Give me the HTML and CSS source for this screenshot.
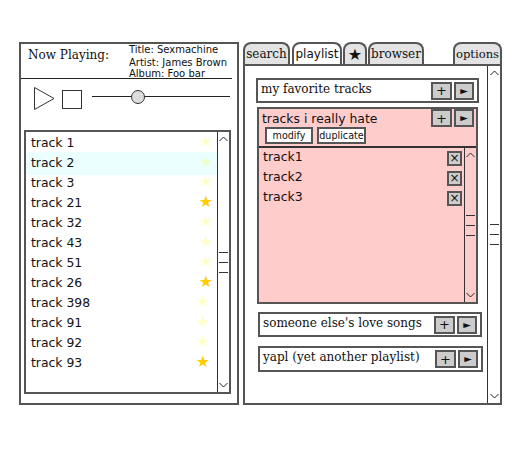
FILE: index.html
```html
<!DOCTYPE html>
<html>
<head>
<meta charset="utf-8">
<link rel="stylesheet" href="styles.css">
</head>
<body>
<div class="app">
  <section class="player">
    <header class="np">
      <div class="np-label">Now Playing:</div>
      <div class="np-info">
        <div class="np-title">Title: Sexmachine</div>
        <div class="np-artist">Artist: James Brown</div>
        <div class="np-album">Album: Foo bar</div>
      </div>
    </header>
    <div class="controls">
      <svg class="play" width="21" height="23" viewBox="0 0 21 23"><polygon points="0.5,0.5 20,11.5 0.5,22.5" fill="#fff" stroke="#333" stroke-width="1"/></svg>
      <div class="stop"></div>
      <div class="slider"><div class="knob"></div></div>
    </div>
    <div class="tracklist">
      <ul class="tracks">
        <li class="track">track 1<span class="star">★</span></li>
        <li class="track track--hl">track 2<span class="star">★</span></li>
        <li class="track">track 3<span class="star">★</span></li>
        <li class="track">track 21<span class="star star--on">★</span></li>
        <li class="track">track 32<span class="star">★</span></li>
        <li class="track">track 43<span class="star">★</span></li>
        <li class="track">track 51<span class="star">★</span></li>
        <li class="track">track 26<span class="star star--on">★</span></li>
        <li class="track track--in">track 398<span class="star">★</span></li>
        <li class="track track--in">track 91<span class="star">★</span></li>
        <li class="track track--in">track 92<span class="star">★</span></li>
        <li class="track track--in">track 93<span class="star star--on">★</span></li>
      </ul>
      <div class="scroll">
        <svg class="chev" width="9" height="6" viewBox="0 0 9 6"><polyline points="0.5,5 4.5,1 8.5,5" fill="none" stroke="#222" stroke-width="1"/></svg>
        <svg class="grip" width="9" height="21" viewBox="0 0 9 21"><path d="M0 0.5H9M0 10.5H9M0 20.5H9" stroke="#333" stroke-width="1"/></svg>
        <svg class="chev" width="9" height="6" viewBox="0 0 9 6"><polyline points="0.5,1 4.5,5 8.5,1" fill="none" stroke="#222" stroke-width="1"/></svg>
      </div>
    </div>
  </section>

  <section class="lists">
    <nav class="tabs">
      <div class="tab tab--search">search</div>
      <div class="tab tab--playlist">playlist</div>
      <div class="tab tab--fav">★</div>
      <div class="tab tab--browser">browser</div>
      <div class="tab tab--options">options</div>
    </nav>
    <div class="tabpanel">
      <div class="playlists">
        <div class="pl pl--a">
          <span class="pl-name">my favorite tracks</span>
          <span class="btn">+</span><span class="btn btn--play">►</span>
        </div>
        <div class="pl pl--open">
          <div class="pl-head">
            <span class="pl-name pl-name--sans">tracks i really hate</span>
            <span class="btn">+</span><span class="btn btn--play">►</span>
          </div>
          <div class="pl-actions">
            <span class="small-btn small-btn--modify">modify</span>
            <span class="small-btn small-btn--dup">duplicate</span>
          </div>
          <div class="pl-body">
            <ul class="sub-tracks">
              <li class="sub-track"><span class="sub-name">track1</span><span class="x-btn">×</span></li>
              <li class="sub-track"><span class="sub-name">track2</span><span class="x-btn">×</span></li>
              <li class="sub-track"><span class="sub-name">track3</span><span class="x-btn">×</span></li>
            </ul>
            <div class="scroll">
              <svg class="chev" width="9" height="6" viewBox="0 0 9 6"><polyline points="0.5,5 4.5,1 8.5,5" fill="none" stroke="#222" stroke-width="1"/></svg>
              <svg class="grip" width="9" height="21" viewBox="0 0 9 21"><path d="M0 0.5H9M0 10.5H9M0 20.5H9" stroke="#333" stroke-width="1"/></svg>
              <svg class="chev" width="9" height="6" viewBox="0 0 9 6"><polyline points="0.5,1 4.5,5 8.5,1" fill="none" stroke="#222" stroke-width="1"/></svg>
            </div>
          </div>
        </div>
        <div class="pl pl--b">
          <span class="pl-name">someone else's love songs</span>
          <span class="btn">+</span><span class="btn btn--play">►</span>
        </div>
        <div class="pl pl--c">
          <span class="pl-name">yapl (yet another playlist)</span>
          <span class="btn">+</span><span class="btn btn--play">►</span>
        </div>
      </div>
      <div class="scroll scroll--panel">
        <svg class="chev" width="9" height="6" viewBox="0 0 9 6"><polyline points="0.5,5 4.5,1 8.5,5" fill="none" stroke="#222" stroke-width="1"/></svg>
        <svg class="grip" width="9" height="21" viewBox="0 0 9 21"><path d="M0 0.5H9M0 10.5H9M0 20.5H9" stroke="#333" stroke-width="1"/></svg>
        <svg class="chev" width="9" height="6" viewBox="0 0 9 6"><polyline points="0.5,1 4.5,5 8.5,1" fill="none" stroke="#222" stroke-width="1"/></svg>
      </div>
    </div>
  </section>
</div>
</body>
</html>
```

FILE: styles.css
```css
* { box-sizing: border-box; }

body {
  margin: 0;
  background: #fff;
  color: #111;
  font-family: "DejaVu Sans", sans-serif;
}

.app {
  display: flex;
  gap: 4px;
  padding: 42px 0 0 19px;
}

/* ---------- left: player ---------- */
.player {
  width: 220px;
  height: 363px;
  border: 2px solid #555;
  display: flex;
  flex-direction: column;
}

.np {
  height: 35px;
  margin-right: 5px;
  border-bottom: 1px solid #222;
  display: flex;
}

.np-label {
  width: 108px;
  padding: 4px 0 0 7px;
  font-family: "DejaVu Serif", serif;
  font-size: 12px;
  line-height: 14px;
}

.np-info { font-size: 10px; }
.np-title { line-height: 12px; }
.np-artist { line-height: 13px; }
.np-album { line-height: 9px; }

.controls {
  height: 51px;
  display: flex;
  align-items: flex-start;
  padding: 8px 0 0 13px;
}

.play { display: block; }

.stop {
  width: 20px;
  height: 19px;
  border: 1px solid #333;
  margin: 3px 0 0 7px;
}

.slider {
  position: relative;
  width: 138px;
  height: 14px;
  margin: 3px 0 0 10px;
}

.slider::before {
  content: "";
  position: absolute;
  left: 0;
  right: 0;
  top: 6px;
  height: 1px;
  background: #222;
}

.knob {
  position: absolute;
  left: 39px;
  top: 0;
  width: 14px;
  height: 14px;
  border: 1px solid #333;
  border-radius: 50%;
  background: #ddd;
}

.tracklist {
  height: 264px;
  margin: 0 6px 0 3px;
  border: 2px solid #555;
  display: flex;
}

.tracks {
  flex: 1;
  list-style: none;
  margin: 0;
  padding: 0;
}

.track {
  height: 20px;
  display: flex;
  align-items: center;
  justify-content: space-between;
  padding: 0 4px 0 5px;
  font-size: 12.4px;
}

.track--hl {
  background: #ecffff;
  box-shadow: 0 3px 0 #ecffff;
}

.track--in { padding-right: 7px; }

.star {
  font-size: 16px;
  line-height: 20px;
  color: rgba(255, 255, 0, 0.22);
}

.star--on { color: #ffcc00; }

.scroll {
  width: 12px;
  border-left: 1px solid #333;
  display: flex;
  flex-direction: column;
  align-items: center;
  justify-content: space-between;
  padding: 4px 0;
}

.scroll--panel { width: 13px; }

.chev, .grip { display: block; }

/* ---------- right: lists ---------- */
.lists {
  width: 259px;
  display: flex;
  flex-direction: column;
}

.tabs {
  display: flex;
  height: 22px;
}

.tab {
  height: 22px;
  border: 2px solid #555;
  border-bottom: 0;
  border-radius: 8px 8px 0 0;
  background: #e3e3e3;
  display: flex;
  align-items: center;
  justify-content: center;
  font-family: "DejaVu Serif", serif;
  font-size: 12px;
}

.tab--search { width: 47px; }
.tab--playlist {
  width: 50px;
  margin-left: 2px;
  background: #fff;
  font-family: "DejaVu Sans", sans-serif;
}
.tab--fav { width: 24px; margin-left: 1px; font-size: 16px; font-family: "DejaVu Sans", sans-serif; }
.tab--browser { width: 56px; margin-left: 1px; }
.tab--options { width: 49px; margin-left: auto; font-size: 11.6px; }

.tabpanel {
  height: 341px;
  border: 2px solid #555;
  display: flex;
}

.playlists {
  flex: 1;
  padding: 12px 0 0 11px;
  display: flex;
  flex-direction: column;
  align-items: flex-start;
}

.pl {
  display: flex;
  align-items: center;
  height: 25px;
  border: 2px solid #555;
  padding: 0 3px;
}

.pl--a { width: 223px; }
.pl--b { width: 224px; margin: 8px 0 0 2px; }
.pl--c { width: 225px; height: 26px; margin: 9px 0 0 2px; }

.pl-name {
  flex: 1;
  padding-bottom: 4px;
  font-family: "DejaVu Serif", serif;
  font-size: 12px;
}

.pl-name--sans {
  font-family: "DejaVu Sans", sans-serif;
  font-size: 12.4px;
  padding-bottom: 0;
}

.btn {
  width: 21px;
  height: 18px;
  border: 2px solid #555;
  background: #ccc;
  display: flex;
  align-items: center;
  justify-content: center;
  font-size: 13px;
  line-height: 1;
}

.btn--play {
  width: 20px;
  margin-left: 2px;
  font-size: 10px;
}

.pl--open {
  width: 221px;
  height: 197px;
  margin: 4px 0 0 1px;
  padding: 0;
  background: #ffcccc;
  flex-direction: column;
  align-items: stretch;
}

.pl-head {
  height: 18px;
  display: flex;
  align-items: center;
  padding: 0 2px 0 3px;
}

.pl-actions {
  display: flex;
  gap: 4px;
  padding: 0 0 2px 6px;
  border-bottom: 2px solid #333;
}

.small-btn {
  height: 17px;
  border: 2px solid #555;
  background: #fff;
  display: flex;
  align-items: center;
  justify-content: center;
  font-size: 9.6px;
}

.small-btn--modify { width: 48px; }
.small-btn--dup { width: 49px; }

.pl-body {
  flex: 1;
  display: flex;
}

.sub-tracks {
  flex: 1;
  list-style: none;
  margin: 0;
  padding: 0;
}

.sub-track {
  height: 20px;
  display: flex;
  align-items: center;
  justify-content: space-between;
  padding: 0 2px 0 4px;
  font-size: 12.5px;
}

.sub-name { padding-bottom: 4px; }

.x-btn {
  width: 15px;
  height: 15px;
  border: 2px solid #555;
  background: #ccc;
  display: flex;
  align-items: center;
  justify-content: center;
  font-size: 12px;
  line-height: 1;
}
```
